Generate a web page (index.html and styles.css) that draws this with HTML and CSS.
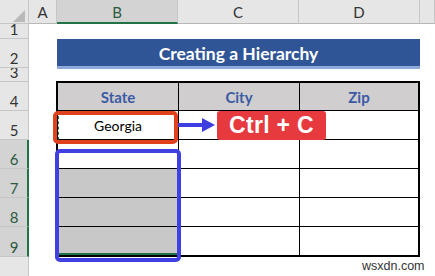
FILE: index.html
```html
<!DOCTYPE html>
<html>
<head>
<meta charset="utf-8">
<link rel="stylesheet" href="styles.css">
</head>
<body>
<div class="sheet">
  <div class="corner"><svg width="28" height="24" viewBox="0 0 28 24"><polygon points="25,10 25,22 13,22" fill="#b9b9b9"/></svg></div>
  <div class="colhead">A</div>
  <div class="colhead sel">B</div>
  <div class="colhead">C</div>
  <div class="colhead">D</div>
  <div class="colhead"></div>

  <div class="rowhead">1</div><div></div><div></div><div></div><div></div><div></div>

  <div class="rowhead">2</div><div></div><div class="title">Creating a Hierarchy</div><div></div>

  <div class="rowhead">3</div><div></div><div></div><div></div><div></div><div></div>

  <div class="table">
    <div class="th">State</div><div class="th">City</div><div class="th last">Zip</div>
    <div class="td copy">Georgia</div><div class="td"></div><div class="td last"></div>
    <div class="td"></div><div class="td"></div><div class="td last"></div>
    <div class="td shade"></div><div class="td"></div><div class="td last"></div>
    <div class="td shade"></div><div class="td"></div><div class="td last"></div>
    <div class="td shade bottom selbottom"></div><div class="td bottom"></div><div class="td last bottom"></div>
  </div>

  <div class="rowhead">4</div><div></div><div></div>
  <div class="rowhead">5</div><div></div><div></div>
  <div class="rowhead rsel">6</div><div></div><div></div>
  <div class="rowhead rsel">7</div><div></div><div></div>
  <div class="rowhead rsel">8</div><div></div><div></div>
  <div class="rowhead rsel">9</div><div></div><div></div>
  <div class="rowhead tail"></div><div></div><div></div><div></div><div></div><div></div>

  <div class="mark red-box"></div>
  <div class="mark blue-box"></div>
  <svg class="arrow" width="40" height="16" viewBox="0 0 40 16"><rect x="0" y="5" width="26" height="4" fill="#3d3de0"/><polygon points="24,0 37,7 24,14" fill="#3d3de0"/></svg>
  <div class="badge">Ctrl + C</div>
  <div class="watermark">wsxdn.com</div>
</div>
</body>
</html>
```

FILE: styles.css
```css
html, body {
  margin: 0;
  padding: 0;
  background: #ffffff;
}

.sheet {
  position: relative;
  width: 435px;
  height: 276px;
  overflow: hidden;
  display: grid;
  grid-template-columns: 29px 28px 121px 121px 121px 15px;
  grid-template-rows: 24px 15px 29px 14px 29px 29px 29px 29px 29px 30px 19px;
  font-family: Lato, "Open Sans", sans-serif;
  background: #ffffff;
}

.corner {
  background: #e6e6e6;
  border-right: 1px solid #c6c6c6;
  border-bottom: 1px solid #c6c6c6;
  box-sizing: border-box;
}
.corner svg { display: block; }

.colhead {
  background: #e6e6e6;
  border-right: 1px solid #c6c6c6;
  border-bottom: 1px solid #b8b8b8;
  box-sizing: border-box;
  display: flex;
  align-items: center;
  justify-content: center;
  font-size: 15px;
  color: #333333;
  line-height: 1;
  padding-top: 1px;
}
.colhead.sel {
  background: #d3d3d3;
  border-bottom: 2px solid #217346;
  color: #2a5a40;
  padding-top: 2px;
}

.rowhead {
  grid-column: 1;
  background: #e6e6e6;
  border-right: 1px solid #c6c6c6;
  border-bottom: 1px solid #c6c6c6;
  box-sizing: border-box;
  display: flex;
  align-items: flex-end;
  justify-content: center;
  font-size: 15px;
  line-height: 10px;
  color: #333333;
  padding-bottom: 4px;
  overflow: hidden;
}
.rowhead.rsel {
  background: #d3d3d3;
  border-right: 2px solid #217346;
  color: #2a5a40;
  padding-left: 1px;
}
.rowhead.tail {
  border-bottom: none;
}

.title {
  grid-column: 3 / span 3;
  background: #2f5597;
  border-bottom: 3px solid #8eaadb;
  box-sizing: border-box;
  height: 30px;
  color: #ffffff;
  font-weight: 700;
  font-size: 17.5px;
  display: flex;
  align-items: center;
  justify-content: center;
  padding-top: 1px;
}

.table {
  grid-row: 5 / 11;
  grid-column: 3 / 6;
  margin-left: -1px;
  margin-top: -1px;
  border: 2px solid #000000;
  box-sizing: border-box;
  display: grid;
  grid-template-columns: 121px 121px 1fr;
  grid-template-rows: 28px 29px 29px 29px 29px 1fr;
}

.th, .td {
  border-right: 1px solid #000000;
  border-bottom: 1px solid #000000;
  box-sizing: border-box;
  display: flex;
  align-items: center;
  justify-content: center;
}
.last { border-right: none; }
.bottom { border-bottom: none; }

.th {
  background: #d0cece;
  color: #3b5aa6;
  font-weight: 700;
  font-size: 15px;
  padding-top: 1px;
}

.td {
  font-size: 14px;
  color: #000000;
}
.td.copy {
  border-left: 1px dashed #217346;
  padding-right: 1px;
}
.td.shade {
  background: #c8c8c8;
}
.td.selbottom {
  border-bottom: 2px solid #217346;
}

.mark {
  position: absolute;
  box-sizing: border-box;
  border-radius: 5px;
}
.red-box {
  left: 53px;
  top: 111px;
  width: 125px;
  height: 33px;
  border: 4px solid #e0421e;
}
.blue-box {
  left: 55px;
  top: 149px;
  width: 126px;
  height: 113px;
  border: 4px solid #3f3fe2;
}

.arrow {
  position: absolute;
  left: 178px;
  top: 118px;
}

.badge {
  position: absolute;
  left: 217px;
  top: 111px;
  width: 109px;
  height: 29px;
  background: #e63a3f;
  border-radius: 3px;
  color: #ffffff;
  font-family: "Liberation Sans", Arial, sans-serif;
  font-weight: 700;
  font-size: 23px;
  display: flex;
  align-items: center;
  justify-content: center;
  letter-spacing: 0.3px;
}

.watermark {
  position: absolute;
  left: 362px;
  top: 259px;
  font-family: "Liberation Sans", Arial, sans-serif;
  font-size: 12.5px;
  color: #333333;
}
```
